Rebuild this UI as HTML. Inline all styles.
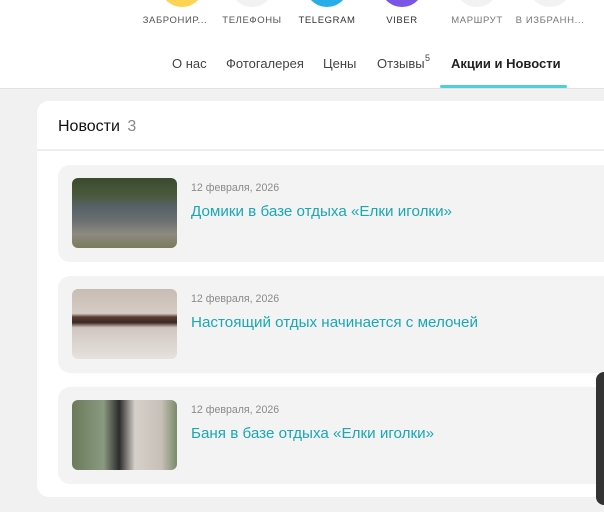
<!DOCTYPE html>
<html><head><meta charset="utf-8"><style>
body{margin:0;width:604px;height:512px;overflow:hidden;background:#f1f1f1;font-family:"Liberation Sans","DejaVu Sans",sans-serif;position:relative}
.hdr{position:absolute;left:0;top:0;width:604px;height:88px;background:#fff;border-bottom:1px solid #e2e2e2}
.c{position:absolute;top:-37px;width:44px;height:44px;border-radius:50%}
.l{position:absolute;top:15px;font-size:9.5px;letter-spacing:.6px;color:#555;width:80px;text-align:center}
.n{position:absolute;top:56px;font-size:13px;color:#444;line-height:16px}
.card{position:absolute;left:37px;top:101px;width:600px;height:396px;background:#fff;border-radius:12px}
.it{position:absolute;left:21px;width:600px;height:97px;background:#f3f3f3;border-radius:12px}
.im{position:absolute;left:14px;top:13px;width:105px;height:70px;border-radius:6px;overflow:hidden}
.d{position:absolute;left:133px;top:17px;font-size:10.6px;color:#8a8a8a}
.t{position:absolute;left:133px;top:38px;font-size:15.2px;color:#1aa7b6}
</style></head><body>
<div class="hdr">
<div class="c" style="left:160px;background:#fdd353"></div>
<div class="c" style="left:230px;background:#f2f2f2"></div>
<div class="c" style="left:305px;background:#27aee9"></div>
<div class="c" style="left:380px;background:#7a55e8"></div>
<div class="c" style="left:455px;background:#f2f2f2"></div>
<div class="c" style="left:528px;background:#f2f2f2"></div>
<div class="l" style="left:135px">ЗАБРОНИР...</div>
<div class="l" style="left:212px">ТЕЛЕФОНЫ</div>
<div class="l" style="left:287px;color:#333">TELEGRAM</div>
<div class="l" style="left:362px;color:#333">VIBER</div>
<div class="l" style="left:437px;color:#777">МАРШРУТ</div>
<div class="l" style="left:510px;color:#777">В ИЗБРАНН...</div>
<div class="n" style="left:172px">О нас</div>
<div class="n" style="left:226px">Фотогалерея</div>
<div class="n" style="left:323px">Цены</div>
<div class="n" style="left:377px">Отзывы<span style="font-size:9px;position:absolute;top:-6px;left:48px">5</span></div>
<div class="n" style="left:451px;color:#222;font-weight:bold">Акции и Новости</div>
<div style="position:absolute;left:440px;top:85px;width:127px;height:3px;background:#4fcfd6;border-radius:2px"></div>
</div>
<div class="card">
<div style="position:absolute;left:21px;top:17px;font-size:16px;color:#111">Новости <span style="color:#888;margin-left:3px">3</span></div>
<div style="position:absolute;left:0;top:48px;width:600px;height:2px;background:#eee"></div>
<div class="it" style="top:64px"><div class="im" style="background:linear-gradient(#3a4a2e 0,#4b5a3c 25%,#556066 40%,#6a6e70 60%,#8d8a80 80%,#7a7c5a 100%)"></div><div class="d">12 февраля, 2026</div><div class="t">Домики в базе отдыха «Елки иголки»</div></div>
<div class="it" style="top:175px"><div class="im" style="background:linear-gradient(#c8bcb4 0,#d6ccc4 35%,#5a3c30 40%,#3a2a24 48%,#d0c6c0 55%,#e6e2de 100%)"></div><div class="d">12 февраля, 2026</div><div class="t">Настоящий отдых начинается с мелочей</div></div>
<div class="it" style="top:286px"><div class="im" style="background:linear-gradient(90deg,#6a7a5a 0,#8a9a80 30%,#2c2c2c 45%,#d6d0ca 60%,#c8c0b8 85%,#7a8a6a 100%)"></div><div class="d">12 февраля, 2026</div><div class="t">Баня в базе отдыха «Елки иголки»</div></div>
</div>
<div style="position:absolute;left:596px;top:372px;width:20px;height:133px;background:#333;border-radius:8px"></div>
</body></html>
